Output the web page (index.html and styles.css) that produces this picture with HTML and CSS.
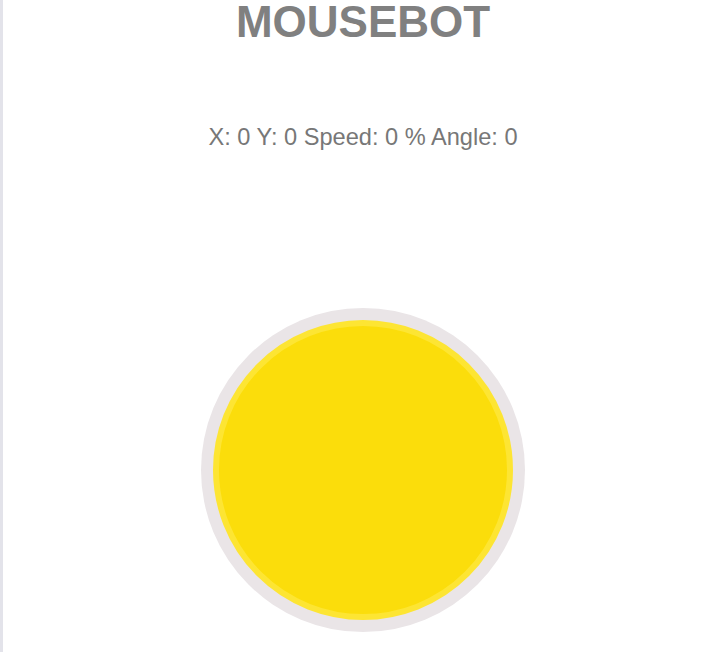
FILE: index.html
```html
<!DOCTYPE html>
<html>
<head>
<meta charset="utf-8">
<link rel="stylesheet" href="styles.css">
</head>
<body>
<div class="page">
  <h1 class="title">MOUSEBOT</h1>
  <p class="status">X: 0 Y: 0 Speed: 0 % Angle: 0</p>
  <div class="joystick">
    <div class="knob"></div>
  </div>
</div>
</body>
</html>
```
FILE: styles.css
```css
html, body {
  margin: 0;
  padding: 0;
  background: #ffffff;
}
body {
  font-family: "Liberation Sans", Arial, sans-serif;
}
.page {
  border-left: 3px solid #e3e3ea;
  height: 652px;
  box-sizing: border-box;
  display: flex;
  flex-direction: column;
  align-items: center;
  overflow: hidden;
}
.title {
  margin: 0;
  font-size: 44px;
  line-height: 44px;
  font-weight: bold;
  color: #808080;
}
.status {
  margin: 80px 0 0 0;
  font-size: 23.6px;
  line-height: 26px;
  color: #777777;
}
.joystick {
  margin-top: 158px;
  width: 324px;
  height: 324px;
  border-radius: 50%;
  background: #eae5e7;
  display: flex;
  align-items: center;
  justify-content: center;
}
.knob {
  width: 300px;
  height: 300px;
  box-sizing: border-box;
  border-radius: 50%;
  background: #fbdd0b;
  border: 6px solid #fde533;
}
```
